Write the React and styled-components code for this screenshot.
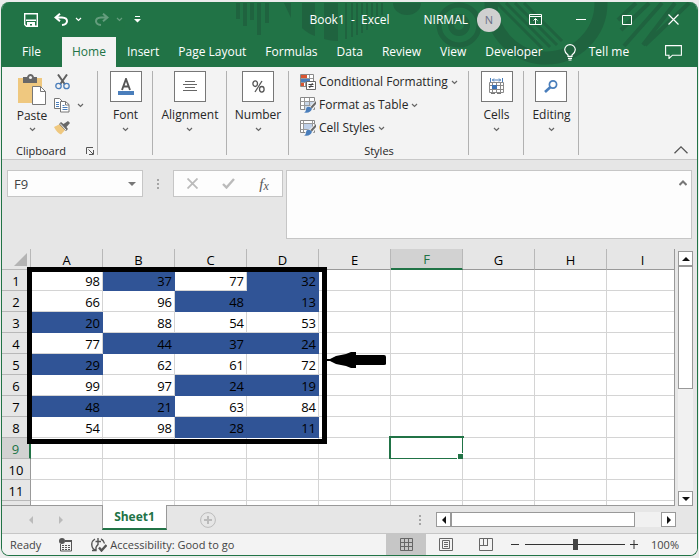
import React from "react";
import styled, { createGlobalStyle, css } from "styled-components";

const green = "#217346";
const pattern = "#1f633f";
const ink = "#262626";

const GlobalStyle = createGlobalStyle`
  * { box-sizing: border-box; }
  body {
    margin: 0;
    background: #ececec;
    color: ${ink};
    font: 12px/16px "Open Sans", "Noto Sans", sans-serif;
  }
  button, input, textarea {
    margin: 0;
    padding: 0;
    border: 0;
    border-radius: 0;
    background: none;
    color: inherit;
    font: inherit;
  }
  svg { display: block; flex: none; }
`;

/* ---------- window ---------- */

const Window = styled.main`
  margin: 2px 1px 0;
  border: 1px solid ${green};
  border-top: 0;
  border-radius: 8px;
  overflow: hidden;
  background: #e6e6e6;
`;

const Header = styled.header`
  position: relative;
  background: ${green};
  color: #fff;
`;

const Backdrop = styled.svg`
  position: absolute;
  top: 0;
  right: 0;
`;

const TitleBar = styled.div`
  position: relative;
  display: grid;
  grid-template-columns: 1fr auto 1fr;
  align-items: center;
  height: 35px;
`;

const QuickAccess = styled.div`
  display: flex;
  align-items: center;
  gap: 10px;
  padding-left: 19px;
`;

const IconPair = styled.div`
  display: flex;
  align-items: center;
  gap: 3px;
  opacity: ${(p) => (p.$faded ? 0.3 : 1)};
`;

const Title = styled.h1`
  margin: 0;
  font: inherit;
  white-space: pre;
`;

const WindowControls = styled.div`
  display: flex;
  align-items: center;
  justify-content: flex-end;
  padding-right: 1px;
`;

const IconButton = styled.button`
  display: flex;
  flex: none;
  align-items: center;
  justify-content: center;
  width: ${(p) => p.$width || 16}px;
  height: ${(p) => p.$height || 16}px;
`;

const Account = styled.button`
  display: flex;
  align-items: center;
  gap: 9px;
  margin-right: 11px;
`;

const Avatar = styled.span`
  width: 24px;
  height: 24px;
  border-radius: 50%;
  background: #d0d0d0;
  color: #6b6f86;
  font-size: 11px;
  line-height: 24px;
  text-align: center;
`;

const TabBar = styled.nav`
  position: relative;
  display: flex;
  align-items: stretch;
  height: 30px;
  padding: 0 15px 0 11px;
`;

const RibbonTab = styled.button`
  padding: 0 10px 0 9px;
  line-height: 30px;
  white-space: nowrap;
  ${(p) =>
    p.$active &&
    css`
      margin: 0 2px 0 11px;
      padding: 0 10px;
      background: #f3f3f3;
      color: ${green};
    `}
`;

const TellMe = styled.button`
  display: flex;
  align-items: center;
  gap: 13px;
  margin: 0 auto 0 11px;
  white-space: nowrap;
`;

/* ---------- ribbon ---------- */

const Ribbon = styled.section`
  position: relative;
  display: flex;
  height: 93px;
  padding-top: 4px;
  border-bottom: 1px solid #c8c8c8;
  background: #f3f3f3;
`;

const Group = styled.div`
  display: flex;
  flex: none;
  flex-direction: column;
  align-items: center;
  width: ${(p) => p.$width}px;
  padding-bottom: 1px;
  background: linear-gradient(#b1b1b1, #b1b1b1) right top / 1px 84px no-repeat;
`;

const GroupFooter = styled.div`
  display: flex;
  align-items: center;
  justify-content: ${(p) => (p.$split ? "space-between" : "center")};
  width: 100%;
  height: 14px;
  margin-top: auto;
  padding: ${(p) => (p.$split ? "0 4px 0 14px" : "0")};
  font-size: 11px;
  line-height: 12px;
`;

const ClipboardBody = styled.div`
  display: flex;
  gap: 6px;
  width: 100%;
  padding: 3px 0 0 14px;
`;

const PasteButton = styled.button`
  display: flex;
  flex-direction: column;
  align-items: center;
  gap: 3px;
  width: 32px;
`;

const ClipboardTools = styled.div`
  display: flex;
  flex-direction: column;
  gap: 7px;
`;

const ToolRow = styled.div`
  display: flex;
  align-items: center;
`;

const LargeButton = styled.button`
  display: flex;
  flex-direction: column;
  align-items: center;
  gap: 4px;
`;

const IconFrame = styled.span`
  display: flex;
  align-items: center;
  justify-content: center;
  width: 32px;
  height: 31px;
  margin-bottom: 1px;
  border: 1px solid #777;
  background: #fff;
`;

const StyleList = styled.div`
  display: flex;
  flex-direction: column;
  gap: 5px;
  width: 100%;
  padding: 2px 0 0 11px;
`;

const StyleButton = styled.button`
  display: flex;
  align-items: center;
  gap: 3px;
  height: 18px;
  white-space: nowrap;
`;

const CollapseButton = styled(IconButton)`
  align-self: flex-end;
  margin: 0 8px 1px auto;
`;

/* ---------- formula bar ---------- */

const FormulaBar = styled.section`
  display: flex;
  align-items: flex-start;
  padding: 10px 5px 10px;
`;

const NameBox = styled.div`
  display: flex;
  align-items: center;
  width: 136px;
  height: 27px;
  border: 1px solid #c6c6c6;
  background: #fdfdfd;
`;

const NameInput = styled.input`
  flex: 1;
  min-width: 0;
  padding-left: 6px;
  color: #444;
  font-size: 13px;
`;

const Grip = styled.span`
  display: grid;
  gap: 2px;
  margin: ${(p) => p.$margin};
  &::before, &::after, i { content: ""; width: 2px; height: 2px; background: #a5a5a5; }
  i { display: block; }
`;

const FormulaButtons = styled.div`
  display: flex;
  width: 110px;
  height: 27px;
  border: 1px solid #c6c6c6;
  background: #fdfdfd;
`;

const FormulaField = styled.div`
  display: flex;
  flex: 1;
  align-items: flex-start;
  height: 69px;
  margin-left: 3px;
  border: 1px solid #c6c6c6;
  background: #fdfdfd;
`;

const FormulaInput = styled.textarea`
  flex: 1;
  height: 100%;
  padding: 4px;
  resize: none;
`;

/* ---------- sheet ---------- */

const Workspace = styled.section`
  display: flex;
  padding-right: 4px;
`;

const Sheet = styled.div`
  position: relative;
  flex: 1;
  min-width: 0;
  overflow: hidden;
  border-right: 1px solid #999;
  border-bottom: 1px solid #999;
`;

const Table = styled.table`
  width: 677px;
  border-collapse: separate;
  border-spacing: 0;
  table-layout: fixed;
  color: #000;
  font-size: 13px;
  line-height: 18px;
`;

const Corner = styled.th`
  width: 29px;
  height: 21px;
  padding: 0 3px 3px 0;
  border-right: 1px solid #b8b8b8;
  border-bottom: 1px solid #b8b8b8;
  background: #e6e6e6;
`;

const CornerMark = styled.div`
  width: 13px;
  height: 13px;
  margin: 4px 0 0 auto;
  background: #b4b4b4;
  clip-path: polygon(100% 0, 100% 100%, 0 100%);
`;

const ColumnHead = styled.th`
  height: 21px;
  padding: 2px 0 0;
  border-right: 1px solid #b8b8b8;
  border-bottom: 1px solid #999;
  background: #e6e6e6;
  font-weight: 400;
  ${(p) =>
    p.$active &&
    css`
      border-bottom: 2px solid ${green};
      background: #d2d2d2;
      color: ${green};
      line-height: 17px;
    `}
`;

const RowHead = styled.th`
  height: ${(p) => (p.$partial ? 4 : 21)}px;
  padding: ${(p) => (p.$partial ? 0 : 2)}px 0 0;
  border-right: 1px solid #999;
  border-bottom: ${(p) => (p.$partial ? 0 : 1)}px solid #b8b8b8;
  background: #e6e6e6;
  font-weight: 400;
  ${(p) =>
    p.$active &&
    css`
      border-right: 2px solid ${green};
      background: #d2d2d2;
      color: ${green};
    `}
`;

const Cell = styled.td`
  position: relative;
  padding: ${(p) => (p.$partial ? 0 : 2)}px 2px 0 0;
  border-right: 1px solid #d4d4d4;
  border-bottom: ${(p) => (p.$partial ? 0 : 1)}px solid #d4d4d4;
  background: #fff;
  text-align: right;
  ${(p) =>
    p.$marked &&
    css`
      border-color: #305496;
      background: #305496;
    `}
`;

const Selection = styled.div`
  position: absolute;
  inset: -2px;
  border: 2px solid ${green};
  &::after {
    content: "";
    position: absolute;
    right: -4px;
    bottom: -4px;
    width: 7px;
    height: 7px;
    border: 1px solid #fff;
    background: ${green};
  }
`;

const RangeOutline = styled.div`
  position: absolute;
  top: 18px;
  left: 25px;
  width: 300px;
  height: 177px;
  border: 5px solid #000;
`;

const Arrow = styled.svg`
  position: absolute;
  top: 103px;
  left: 324px;
`;

const ScrollButton = styled.button`
  display: flex;
  flex: none;
  align-items: center;
  justify-content: center;
  width: 15px;
  height: 15px;
  border: 1px solid #999;
  background: #fff;
`;

const VerticalScroll = styled.div`
  display: flex;
  flex-direction: column;
  width: 15px;
  margin: 2px 0 0 3px;
  background: #f1f1f1;
`;

const VerticalThumb = styled.div`
  height: 123px;
  margin-bottom: auto;
  border: 1px solid #999;
  background: #fff;
`;

const HorizontalScroll = styled.div`
  display: flex;
  flex: none;
  width: 240px;
  background: #f1f1f1;
`;

const HorizontalThumb = styled.div`
  width: 184px;
  margin-right: auto;
  border: 1px solid #999;
  background: #fff;
`;

/* ---------- sheet tabs and status ---------- */

const SheetBar = styled.section`
  display: flex;
  align-items: center;
  height: 27px;
  padding: 0 21px 0 18px;
`;

const SheetTab = styled.button`
  position: relative;
  align-self: flex-start;
  width: 65px;
  height: 25px;
  margin: -1px 33px 0 22px;
  border: solid #999;
  border-width: 0 1px;
  border-bottom: 2px solid ${green};
  background: #fff;
  color: ${green};
  font-weight: 700;
`;

const StatusBar = styled.footer`
  display: flex;
  align-items: center;
  height: 22px;
  padding: 0 18px 0 8px;
  border-top: 1px solid #c6c6c6;
  background: #f3f3f3;
  color: #444;
  font-size: 11px;
`;

const StatusText = styled.span`
  margin-right: 18px;
`;

const AccessibilityButton = styled.button`
  display: flex;
  align-items: center;
  gap: 3px;
  margin: 0 auto 0 18px;
  white-space: nowrap;
`;

const ViewButton = styled(IconButton)`
  width: 40px;
  height: 21px;
  background: ${(p) => (p.$active ? "#c6c6c6" : "none")};
`;

const ZoomSlider = styled.input`
  width: 102px;
  height: 11px;
  appearance: none;
  background: linear-gradient(#333, #333) center / 100px 1px no-repeat;
  &::-webkit-slider-thumb {
    width: 5px;
    height: 11px;
    appearance: none;
    background: #444;
  }
`;

const ZoomValue = styled.button`
  width: 37px;
  text-align: right;
`;

/* ---------- drawings ---------- */

const HeaderArt = () => (
  <Backdrop width="699" height="65" viewBox="1 2 699 65" fill="none" stroke={pattern} aria-hidden="true">
    <g fill={pattern} stroke="none">
      <path d="M239 3h4v16h-4zM246 3h4v23h-4zM253 3h4v17h-4zM260 3h4v32h-4zM268 3h4v20h-4z" />
      <path d="M287 3h7v15zM305 3h13v33q-8-3-13-8zM327 3h14v38q-8 0-14-2z" />
      <path d="M348 3h2v36h-2zM354 3h2v34h-2zM359 3h2v32h-2zM364 3h2v30h-2zM369 3h2v27h-2zM374 3h2v23h-2zM379 3h2v18h-2zM384 3h2v12h-2z" />
      <path d="M396 3h28a14 12 0 0 1-28 0z" />
    </g>
    <circle cx="462" cy="25" r="20" strokeWidth="5" />
    <circle cx="462" cy="25" r="8" strokeWidth="6" />
    <circle cx="549" cy="3" r="55" strokeWidth="13" />
    <path d="M500 3l45 45M509 3l44 44M518 3l42 42M527 3l38 38" strokeWidth="3" />
    <path d="M639 3l-18 17M652 3l-28 27M665 3l-38 43M678 3l-32 42M692 3l-44 42" strokeWidth="4" />
  </Backdrop>
);

const Chevron = ({ color = "#666" }) => (
  <svg width="7" height="5" viewBox="0 0 7 5" fill="none" stroke={color} strokeWidth="1.2">
    <path d="M1 1l2.500 2.500L6 1" />
  </svg>
);

const Triangle = ({ direction = "down", color = "#111", size = 8 }) => {
  const turn = { up: 180, down: 0, left: 90, right: 270 }[direction];
  return (
    <svg width={size} height={size} viewBox="0 0 8 8" fill={color}>
      <path d="M0 2h8L4 6z" transform={`rotate(${turn} 4 4)`} />
    </svg>
  );
};

const SaveIcon = () => (
  <svg width="14" height="14" viewBox="0 0 14 14" fill="none" stroke="#fff" strokeWidth="1.4">
    <path d="M.7.7h12.600v12.600H2.500L.7 11.500z" />
    <path d="M2 7.300h10" />
    <path d="M3 9h8v5H8v-3H6v3H3z" fill="#fff" stroke="none" />
  </svg>
);

const UndoIcon = ({ flip }) => (
  <svg width="14" height="13" viewBox="0 0 14 13" fill="none" stroke="#fff" strokeWidth="2">
    <g transform={flip ? "translate(14 0) scale(-1 1)" : undefined}>
      <path d="M6 .7L1.500 4.500 6 8.300M2 4.500h6q5 .2 5 3.700-.2 3.200-5 3.800" />
    </g>
  </svg>
);

const CustomizeIcon = () => (
  <svg width="7" height="7" viewBox="0 0 7 7" fill="#fff">
    <path d="M1 0h5v1H1zM1 3h6L3.500 6.500 0 3z" />
  </svg>
);

const RibbonDisplayIcon = () => (
  <svg width="13" height="11" viewBox="0 0 13 11" fill="none" stroke="#fff">
    <path d="M.5.5h12v10H.5zM0 2.500h13M6.500 10V5M4.500 6.500l2-2 2 2" />
  </svg>
);

const MinimizeIcon = () => (
  <svg width="10" height="10" viewBox="0 0 10 10" stroke="#fff">
    <path d="M0 4.500h10" />
  </svg>
);

const MaximizeIcon = () => (
  <svg width="10" height="10" viewBox="0 0 10 10" fill="none" stroke="#fff">
    <path d="M.5.5h9v9h-9z" />
  </svg>
);

const CloseIcon = () => (
  <svg width="11" height="11" viewBox="0 0 11 11" stroke="#fff" strokeWidth="1.2">
    <path d="M.5.5l10 10M10.500.5l-10 10" />
  </svg>
);

const BulbIcon = () => (
  <svg width="12" height="17" viewBox="0 0 12 17" fill="none" stroke="#fff" strokeWidth="1.2">
    <path d="M4 12.400V11Q.7 8.500.7 5.800A5.300 5.200 0 0 1 11.300 5.800Q11.300 8.500 8 11v1.400zM4 14.300h4M4.500 16h3" />
  </svg>
);

const CommentIcon = () => (
  <svg width="17" height="14" viewBox="0 0 17 14" fill="none" stroke="#fff" strokeWidth="1.1">
    <path d="M.6.6h15.800v9.600H7.500L4 13.500v-3.300H.6z" />
  </svg>
);

const PasteIcon = () => (
  <svg width="29" height="31" viewBox="0 0 29 31">
    <path d="M0 4h24v25H0z" fill="#efc87f" />
    <path d="M5 3h4q1-3 3.500-3T16 3h3v6H5z" fill="#686868" />
    <circle cx="12.500" cy="3.500" r="1.500" fill="#f3f3f3" />
    <path d="M14.500 12.500h8l5 5v13h-13z" fill="#fff" stroke="#777" />
    <path d="M22.500 12.500v5h5" fill="none" stroke="#777" />
  </svg>
);

const CutIcon = () => (
  <svg width="15" height="16" viewBox="0 0 15 16" fill="none">
    <path d="M3 .5l7 10M12 .5l-7 10" stroke="#606060" strokeWidth="2" />
    <circle cx="3.500" cy="12" r="2.700" stroke="#4a7ebb" strokeWidth="1.300" />
    <circle cx="11.500" cy="12" r="2.700" stroke="#4a7ebb" strokeWidth="1.300" />
  </svg>
);

const CopyIcon = () => (
  <svg width="16" height="15" viewBox="0 0 16 15" fill="#fff" stroke="#777">
    <path d="M.5.5h5l3 3v7h-8z" />
    <path d="M6.500 3.500h5l3.500 3v7.500H6.500z" />
    <path d="M11.500 3.500v3.500H15" fill="none" />
    <path d="M2 4.500h3M2 6.500h3M2 8.500h3M8.500 7.500h2M8.500 9.500h5M8.500 11.500h5" stroke="#4a7ebb" />
  </svg>
);

const BrushIcon = () => (
  <svg width="16" height="14" viewBox="0 0 16 14">
    <path d="M0 6l6-3 5 6-4 4.500Q3 12 0 6z" fill="#efc87f" />
    <path d="M5 3l2-2 2.500 2L14 0l2 2-3.500 4L14 8l-2 2z" fill="#686868" />
    <path d="M6 2.500l6 6.500" stroke="#f3f3f3" />
  </svg>
);

const LauncherIcon = () => (
  <svg width="8" height="8" viewBox="0 0 8 8" fill="none" stroke="#555">
    <path d="M.5 7V.5H7M2.500 2.500l4.500 4.500M7.500 3v4.500H3" />
  </svg>
);

const FontIcon = () => (
  <svg width="18" height="18" viewBox="0 0 18 18">
    <path d="M5 12L9 1l4 11M6.500 8.500h5" fill="none" stroke="#555" strokeWidth="1.900" />
    <path d="M1 13h16v4H1z" fill="#4a7ebb" />
  </svg>
);

const AlignIcon = () => (
  <svg width="14" height="11" viewBox="0 0 14 11" stroke="#666">
    <path d="M2 .5h10M0 3.500h14M2 6.500h10M0 9.500h14" />
  </svg>
);

const PercentIcon = () => (
  <svg width="13" height="13" viewBox="0 0 13 13" fill="none" stroke="#555" strokeWidth="1.300">
    <ellipse cx="3.200" cy="3.700" rx="2.300" ry="2.800" />
    <ellipse cx="9.800" cy="9.300" rx="2.300" ry="2.800" />
    <path d="M10 1L3 12" />
  </svg>
);

const CellsIcon = () => (
  <svg width="16" height="17" viewBox="0 0 16 17" fill="none" stroke="#777">
    <path d="M1.500 0v4M13.500 0v4M3 2h9M5 .5L3.500 2 5 3.500M10 .5L11.500 2 10 3.500" stroke="#4a7ebb" />
    <path d="M.5 4.500h14v10H.5zM.5 7.500h14M.5 11.500h14M3.500 4v10M7.500 4v10M11.500 4v10" stroke="#8a8a8a" />
    <path d="M2 15.500h4M8 15.500h4" />
    <path d="M3 7h5v4H3z" fill="#3e73b4" stroke="none" />
  </svg>
);

const SearchIcon = () => (
  <svg width="14" height="13" viewBox="0 0 14 13" fill="none" stroke="#4a7ebb">
    <circle cx="9" cy="4.500" r="3.600" strokeWidth="1.700" />
    <path d="M6.500 7L1 12" strokeWidth="2.600" />
  </svg>
);

const ConditionalIcon = () => (
  <svg width="16" height="16" viewBox="0 0 16 16" fill="none">
    <path d="M.5.5h13v12H.5z" fill="#fff" stroke="#888" />
    <path d="M1 4.500h12M1 8.500h12M5.500 1v11M9.500 1v11" stroke="#999" />
    <path d="M1 1h6v3H1zM1 9h3v3H1z" fill="#d95531" />
    <path d="M1 5h9v3H1z" fill="#4a7ebb" />
    <path d="M6.500 7.500h9v8h-9z" fill="#fff" stroke="#666" />
    <path d="M8.500 10.500h5M8.500 12.500h5M12.500 9l-3 5" stroke="#444" />
  </svg>
);

const TableStyleIcon = ({ cell }) => (
  <svg width="16" height="16" viewBox="0 0 16 16" fill="none">
    <path d="M.5.5h14v12H.5z" fill="#fff" stroke="#888" />
    {!cell && <path d="M5 4h9v8H5z" fill="#c9d7e8" />}
    <path d={cell ? "M.5 3.500h14M.5 9.500h14M3.500 1v11M12.500 1v11" : "M.5 4.500h14M.5 8.500h14M4.500 1v11M9.500 1v11"} stroke="#999" />
    {cell && <path d="M4 4h8v5H4z" fill="#bfd0e8" />}
    <path d="M16 3l-6 6-3 1-4 6h7l3-3 3-5z" fill="#f3f3f3" />
    <path d="M16 4l-5.500 6 1.500 1.500L16 7z" fill="#686868" />
    <path d="M10 10q-4-1-4 3-.5 2-2 2.500 7 1 8-4z" fill="#4a7ebb" />
  </svg>
);

const CollapseIcon = () => (
  <svg width="14" height="8" viewBox="0 0 14 8" fill="none" stroke="#555" strokeWidth="1.300">
    <path d="M.5 7.300L7 .9l6.500 6.400" />
  </svg>
);

const ExpandUpIcon = () => (
  <svg width="8" height="6" viewBox="0 0 8 6" fill="none" stroke="#777" strokeWidth="2">
    <path d="M.5 5L4 1.500 7.500 5" />
  </svg>
);

const CancelIcon = () => (
  <svg width="11" height="11" viewBox="0 0 11 11" stroke="#bbb" strokeWidth="1.800">
    <path d="M.5.5l10 10M10.500.5l-10 10" />
  </svg>
);

const AcceptIcon = () => (
  <svg width="13" height="11" viewBox="0 0 13 11" fill="none" stroke="#bbb" strokeWidth="2.400">
    <path d="M1 6l3.500 3.500L12 1" />
  </svg>
);

const FunctionLabel = styled.span`
  color: #555;
  font: italic 400 15px/20px "Liberation Serif", serif;
  sub { font-size: 12px; line-height: 0; vertical-align: -1px; }
`;

const AddIcon = () => (
  <svg width="16" height="16" viewBox="0 0 16 16" fill="none" stroke="#bbb">
    <circle cx="8" cy="8" r="7.400" />
    <path d="M8 4v8M4 8h8" strokeWidth="2" />
  </svg>
);

const MacroIcon = () => (
  <svg width="14" height="14" viewBox="0 0 14 14" fill="none" stroke="#555">
    <path d="M1.500 6v7h11V2.500H6" />
    <path d="M6 3h7" strokeWidth="2" />
    <path d="M3 7.500h2M6 7.500h2M9 7.500h2M3 9.500h2M6 9.500h2M9 9.500h2M3 11.500h2M6 11.500h2M9 11.500h2" />
    <circle cx="3" cy="3" r="3" fill="#555" stroke="none" />
  </svg>
);

const AccessibilityIcon = () => (
  <svg width="16" height="14" viewBox="0 0 16 14" fill="none" stroke="#555" strokeWidth="1.400">
    <path d="M4 1Q.5 3 .8 7T5 12.500M1 12.500h4V9M10 1q3 1.500 3.500 4.500" />
    <path d="M7 0v7M4.500 3.500H10M7 6.500l-2 2.500" />
    <path d="M8 9.500l2.500 3 5-5.500" strokeWidth="2.400" />
  </svg>
);

const NormalViewIcon = () => (
  <svg width="13" height="13" viewBox="0 0 13 13" fill="none" stroke="#666">
    <path d="M.5.5h12v12H.5zM.5 4.500h12M.5 8.500h12M4.500 0v13M8.500 0v13" />
  </svg>
);

const PageLayoutIcon = () => (
  <svg width="14" height="13" viewBox="0 0 14 13" fill="none" stroke="#666">
    <path d="M.5.5h13v12H.5zM3.500 2.500h7v8h-7zM5 4.500h4M5 6.500h4M5 8.500h4" />
  </svg>
);

const PageBreakIcon = () => (
  <svg width="14" height="13" viewBox="0 0 14 13" fill="none" stroke="#666">
    <path d="M.5.5h13v12H.5zM4.500 0v7M8.500 0v7M0 7.500h9" />
  </svg>
);

const SignIcon = ({ plus }) => (
  <svg width="8" height="9" viewBox="0 0 8 9" stroke="#333">
    <path d={plus ? "M0 4.500h8M4 0v9" : "M0 4.500h8"} />
  </svg>
);

/* ---------- data ---------- */

const tabs = ["File", "Home", "Insert", "Page Layout", "Formulas", "Data", "Review", "View", "Developer"];
const columns = ["A", "B", "C", "D", "E", "F", "G", "H", "I"];
const values = [
  [98, 37, 77, 32],
  [66, 96, 48, 13],
  [20, 88, 54, 53],
  [77, 44, 37, 24],
  [29, 62, 61, 72],
  [99, 97, 24, 19],
  [48, 21, 63, 84],
  [54, 98, 28, 11],
];
const rows = Array.from({ length: 11 }, (_, i) => i + 1);

const RibbonMenu = ({ width, label, children }) => (
  <Group $width={width}>
    <LargeButton>
      <IconFrame>{children}</IconFrame>
      {label}
      <Chevron />
    </LargeButton>
  </Group>
);

const Grid = () => (
  <Table>
    <thead>
      <tr>
        <Corner aria-label="Select all"><CornerMark /></Corner>
        {columns.map((c) => (
          <ColumnHead key={c} scope="col" $active={c === "F"}>{c}</ColumnHead>
        ))}
      </tr>
    </thead>
    <tbody>
      {rows.map((r) => (
        <tr key={r}>
          <RowHead scope="row" $active={r === 9}>{r}</RowHead>
          {columns.map((c, i) => {
            const value = values[r - 1]?.[i];
            return (
              <Cell key={c} $marked={value < 50}>
                {value}
                {c === "F" && r === 9 && <Selection />}
              </Cell>
            );
          })}
        </tr>
      ))}
      <tr>
        <RowHead $partial />
        {columns.map((c) => <Cell key={c} $partial />)}
      </tr>
    </tbody>
  </Table>
);

export default function App() {
  return (
    <>
      <GlobalStyle />
      <Window>
        <Header>
          <HeaderArt />
          <TitleBar>
            <QuickAccess>
              <IconButton aria-label="Save" $width={20}><SaveIcon /></IconButton>
              <IconPair>
                <IconButton aria-label="Undo" $width={20}><UndoIcon /></IconButton>
                <IconButton aria-label="Undo history" $width={8}><Chevron color="#fff" /></IconButton>
              </IconPair>
              <IconPair $faded>
                <IconButton aria-label="Redo" $width={20}><UndoIcon flip /></IconButton>
                <IconButton aria-label="Redo history" $width={8}><Chevron color="#fff" /></IconButton>
              </IconPair>
              <IconButton aria-label="Customize toolbar" $width={8}><CustomizeIcon /></IconButton>
            </QuickAccess>
            <Title>{"Book1  -  Excel"}</Title>
            <WindowControls>
              <Account>NIRMAL <Avatar>N</Avatar></Account>
              <IconButton aria-label="Ribbon display options" $width={46}><RibbonDisplayIcon /></IconButton>
              <IconButton aria-label="Minimize" $width={46}><MinimizeIcon /></IconButton>
              <IconButton aria-label="Maximize" $width={46}><MaximizeIcon /></IconButton>
              <IconButton aria-label="Close" $width={46}><CloseIcon /></IconButton>
            </WindowControls>
          </TitleBar>
          <TabBar>
            {tabs.map((t) => (
              <RibbonTab key={t} $active={t === "Home"}>{t}</RibbonTab>
            ))}
            <TellMe><BulbIcon />Tell me</TellMe>
            <IconButton aria-label="Comments" $width={17} $height={30}><CommentIcon /></IconButton>
          </TabBar>
        </Header>

        <Ribbon>
          <Group $width={96}>
            <ClipboardBody>
              <PasteButton><PasteIcon />Paste<Chevron /></PasteButton>
              <ClipboardTools>
                <ToolRow><IconButton aria-label="Cut"><CutIcon /></IconButton></ToolRow>
                <ToolRow>
                  <IconButton aria-label="Copy"><CopyIcon /></IconButton>
                  <IconButton aria-label="Copy options" $width={20}><Chevron /></IconButton>
                </ToolRow>
                <ToolRow><IconButton aria-label="Format painter"><BrushIcon /></IconButton></ToolRow>
              </ClipboardTools>
            </ClipboardBody>
            <GroupFooter $split>
              Clipboard
              <IconButton aria-label="Clipboard settings" $width={8} $height={8}><LauncherIcon /></IconButton>
            </GroupFooter>
          </Group>
          <RibbonMenu width={55} label="Font"><FontIcon /></RibbonMenu>
          <RibbonMenu width={74} label="Alignment"><AlignIcon /></RibbonMenu>
          <RibbonMenu width={62} label="Number"><PercentIcon /></RibbonMenu>
          <Group $width={180}>
            <StyleList>
              <StyleButton><ConditionalIcon />Conditional Formatting<Chevron /></StyleButton>
              <StyleButton><TableStyleIcon />Format as Table<Chevron /></StyleButton>
              <StyleButton><TableStyleIcon cell />Cell Styles<Chevron /></StyleButton>
            </StyleList>
            <GroupFooter>Styles</GroupFooter>
          </Group>
          <RibbonMenu width={55} label="Cells"><CellsIcon /></RibbonMenu>
          <RibbonMenu width={55} label="Editing"><SearchIcon /></RibbonMenu>
          <CollapseButton aria-label="Collapse ribbon"><CollapseIcon /></CollapseButton>
        </Ribbon>

        <FormulaBar>
          <NameBox>
            <NameInput aria-label="Name box" defaultValue="F9" />
            <IconButton aria-label="Name list" $width={20}><Triangle color="#777" /></IconButton>
          </NameBox>
          <Grip $margin="9px 14px 0"><i /></Grip>
          <FormulaButtons>
            <IconButton aria-label="Cancel" $width={36} $height={25}><CancelIcon /></IconButton>
            <IconButton aria-label="Enter" $width={36} $height={25}><AcceptIcon /></IconButton>
            <IconButton aria-label="Insert function" $width={36} $height={25}>
              <FunctionLabel>f<sub>x</sub></FunctionLabel>
            </IconButton>
          </FormulaButtons>
          <FormulaField>
            <FormulaInput aria-label="Formula" />
            <IconButton aria-label="Collapse formula bar" $height={24}><ExpandUpIcon /></IconButton>
          </FormulaField>
        </FormulaBar>

        <Workspace>
          <Sheet>
            <Grid />
            <RangeOutline />
            <Arrow width="60" height="16" viewBox="0 0 60 16">
              <path d="M0 7h4l6-3 10-2 5-2h5v3h28q2 0 2 2v7q0 1-2 1H30v3h-5l-5-2-10-2-6-3H0z" />
            </Arrow>
          </Sheet>
          <VerticalScroll>
            <ScrollButton aria-label="Scroll up"><Triangle direction="up" /></ScrollButton>
            <VerticalThumb />
            <ScrollButton aria-label="Scroll down"><Triangle /></ScrollButton>
          </VerticalScroll>
        </Workspace>

        <SheetBar>
          <IconButton aria-label="Previous sheet" $width={22}><Triangle direction="left" color="#bbb" /></IconButton>
          <IconButton aria-label="Next sheet" $width={38}><Triangle direction="right" color="#bbb" /></IconButton>
          <SheetTab>Sheet1</SheetTab>
          <IconButton aria-label="New sheet"><AddIcon /></IconButton>
          <Grip $margin="0 15px 0 auto"><i /></Grip>
          <HorizontalScroll>
            <ScrollButton aria-label="Scroll left"><Triangle direction="left" /></ScrollButton>
            <HorizontalThumb />
            <ScrollButton aria-label="Scroll right"><Triangle direction="right" /></ScrollButton>
          </HorizontalScroll>
        </SheetBar>

        <StatusBar>
          <StatusText>Ready</StatusText>
          <IconButton aria-label="Record macro" $width={14}><MacroIcon /></IconButton>
          <AccessibilityButton><AccessibilityIcon />Accessibility: Good to go</AccessibilityButton>
          <ViewButton aria-label="Normal view" $active><NormalViewIcon /></ViewButton>
          <ViewButton aria-label="Page layout view"><PageLayoutIcon /></ViewButton>
          <ViewButton aria-label="Page break preview"><PageBreakIcon /></ViewButton>
          <IconButton aria-label="Zoom out" $width={18}><SignIcon /></IconButton>
          <ZoomSlider type="range" aria-label="Zoom" min="0" max="100" defaultValue="50" />
          <IconButton aria-label="Zoom in"><SignIcon plus /></IconButton>
          <ZoomValue>100%</ZoomValue>
        </StatusBar>
      </Window>
    </>
  );
}
